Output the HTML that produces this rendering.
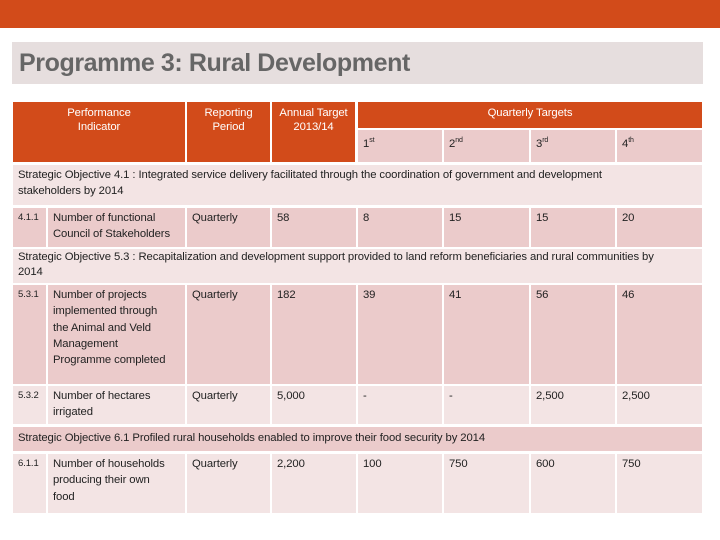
<!DOCTYPE html>
<html><head><style>
body{margin:0;width:720px;height:540px;background:#fff;position:relative;overflow:hidden;font-family:"Liberation Sans",sans-serif;}
.a{position:absolute;box-sizing:border-box;font-size:11.3px;color:#222;line-height:16.3px;padding:2px 5px;letter-spacing:-0.1px;white-space:nowrap}
.o{background:#D24B1A;color:#fff;text-align:center}
.d{background:#EBCBCB}
.l{background:#F3E4E4}
.n{font-size:9.5px}
sup{font-size:7px;line-height:0}
</style></head><body>
<div style="position:absolute;left:0;top:0;width:720px;height:28px;background:#D24B1A"></div>
<div style="position:absolute;left:12px;top:42px;width:691px;height:42px;background:#E6DEDE"></div>
<div style="position:absolute;left:19px;top:48px;font-size:25px;font-weight:bold;color:#666;letter-spacing:-0.4px;line-height:30px">Programme 3: Rural Development</div>

<div class="a o" style="left:13px;top:102px;width:172px;height:60px;line-height:14px;padding-top:4px">Performance<br>Indicator</div>
<div class="a o" style="left:187px;top:102px;width:83px;height:60px;line-height:14px;padding-top:4px">Reporting<br>Period</div>
<div class="a o" style="left:272px;top:102px;width:83px;height:60px;line-height:14px;padding-top:4px">Annual Target<br>2013/14</div>
<div class="a o" style="left:358px;top:102px;width:344px;height:26px;line-height:16px;padding-top:3px">Quarterly Targets</div>
<div class="a d" style="left:358px;top:130px;width:84px;height:32px;padding-top:6px">1<sup>st</sup></div>
<div class="a d" style="left:444px;top:130px;width:85px;height:32px;padding-top:6px">2<sup>nd</sup></div>
<div class="a d" style="left:531px;top:130px;width:84px;height:32px;padding-top:6px">3<sup>rd</sup></div>
<div class="a d" style="left:617px;top:130px;width:85px;height:32px;padding-top:6px">4<sup>th</sup></div>

<div class="a l" style="left:13px;top:165px;width:689px;height:40px">Strategic Objective 4.1 : Integrated service delivery facilitated through the coordination of government and development<br>stakeholders by 2014</div>

<div class="a d n" style="left:13px;top:208px;width:33px;height:39px">4.1.1</div>
<div class="a d" style="left:48px;top:208px;width:137px;height:39px">Number of functional<br>Council of Stakeholders</div>
<div class="a d" style="left:187px;top:208px;width:83px;height:39px">Quarterly</div>
<div class="a d" style="left:272px;top:208px;width:84px;height:39px">58</div>
<div class="a d" style="left:358px;top:208px;width:84px;height:39px">8</div>
<div class="a d" style="left:444px;top:208px;width:85px;height:39px">15</div>
<div class="a d" style="left:531px;top:208px;width:84px;height:39px">15</div>
<div class="a d" style="left:617px;top:208px;width:85px;height:39px">20</div>

<div class="a l" style="left:13px;top:249px;width:689px;height:34px;padding-top:1px;line-height:15px">Strategic Objective 5.3 : Recapitalization and development support provided to land reform beneficiaries and rural communities by<br>2014</div>

<div class="a d n" style="left:13px;top:285px;width:33px;height:99px">5.3.1</div>
<div class="a d" style="left:48px;top:285px;width:137px;height:99px">Number of projects<br>implemented through<br>the Animal and Veld<br>Management<br>Programme completed</div>
<div class="a d" style="left:187px;top:285px;width:83px;height:99px">Quarterly</div>
<div class="a d" style="left:272px;top:285px;width:84px;height:99px">182</div>
<div class="a d" style="left:358px;top:285px;width:84px;height:99px">39</div>
<div class="a d" style="left:444px;top:285px;width:85px;height:99px">41</div>
<div class="a d" style="left:531px;top:285px;width:84px;height:99px">56</div>
<div class="a d" style="left:617px;top:285px;width:85px;height:99px">46</div>

<div class="a l n" style="left:13px;top:386px;width:33px;height:38px">5.3.2</div>
<div class="a l" style="left:48px;top:386px;width:137px;height:38px">Number of hectares<br>irrigated</div>
<div class="a l" style="left:187px;top:386px;width:83px;height:38px">Quarterly</div>
<div class="a l" style="left:272px;top:386px;width:84px;height:38px">5,000</div>
<div class="a l" style="left:358px;top:386px;width:84px;height:38px">-</div>
<div class="a l" style="left:444px;top:386px;width:85px;height:38px">-</div>
<div class="a l" style="left:531px;top:386px;width:84px;height:38px">2,500</div>
<div class="a l" style="left:617px;top:386px;width:85px;height:38px">2,500</div>

<div class="a d" style="left:13px;top:427px;width:689px;height:24px;padding-top:3px">Strategic Objective 6.1 Profiled rural households enabled to improve their food security by 2014</div>

<div class="a l n" style="left:13px;top:454px;width:33px;height:59px">6.1.1</div>
<div class="a l" style="left:48px;top:454px;width:137px;height:59px">Number of households<br>producing their own<br>food</div>
<div class="a l" style="left:187px;top:454px;width:83px;height:59px">Quarterly</div>
<div class="a l" style="left:272px;top:454px;width:84px;height:59px">2,200</div>
<div class="a l" style="left:358px;top:454px;width:84px;height:59px">100</div>
<div class="a l" style="left:444px;top:454px;width:85px;height:59px">750</div>
<div class="a l" style="left:531px;top:454px;width:84px;height:59px">600</div>
<div class="a l" style="left:617px;top:454px;width:85px;height:59px">750</div>
</body></html>
